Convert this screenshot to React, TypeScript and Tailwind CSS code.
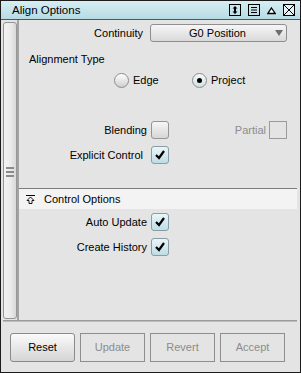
import React from "react";

const CheckMark = () => (
  <svg width="18" height="18" viewBox="0 0 18 18" className="block">
    <path d="M5 9 L8 12 L13 5" fill="none" stroke="#000" strokeWidth="2.2" />
  </svg>
);

const CheckBox: React.FC<{ checked?: boolean; disabled?: boolean }> = ({ checked, disabled }) => {
  if (disabled) {
    return <div className="w-[18px] h-[18px] border border-[#9a9a9a]" />;
  }
  if (checked) {
    return (
      <div className="w-[18px] h-[18px] rounded-[3px] border border-[#8a9ca4] bg-gradient-to-b from-[#eaf6f9] to-[#bddde7] flex items-center justify-center">
        <div className="-m-px">
          <CheckMark />
        </div>
      </div>
    );
  }
  return (
    <div className="w-[18px] h-[18px] rounded-[3px] border border-[#959595] bg-gradient-to-b from-[#f7f7f7] to-[#d6d6d6]" />
  );
};

const Radio: React.FC<{ checked?: boolean }> = ({ checked }) => (
  <div
    className={
      "w-[15px] h-[15px] rounded-full border border-[#8c8c8c] flex items-center justify-center " +
      (checked
        ? "bg-gradient-to-b from-[#f6fafa] to-[#cfe0e3]"
        : "bg-gradient-to-b from-[#ffffff] to-[#cfcfcf]")
    }
  >
    {checked && <div className="w-[5px] h-[5px] rounded-full bg-black" />}
  </div>
);

// label right edge sits at x=147, box starts at x=151
const CheckRow: React.FC<{ label: string; checked?: boolean; extra?: string }> = ({ label, checked, extra }) => (
  <div className="flex items-center h-[18px]">
    <div className={"w-[128px] text-right " + (extra ?? "")}>{label}</div>
    <div className="ml-[4px]">
      <CheckBox checked={checked} />
    </div>
  </div>
);

const TitleIcons = () => (
  <div className="flex items-center gap-[7px] pr-[5px]">
    <svg width="12" height="12" viewBox="0 0 12 12">
      <rect x="0.5" y="0.5" width="11" height="11" fill="none" stroke="#000" />
      <path d="M6 2 L8.5 4.5 H3.5 Z M6 10 L8.5 7.5 H3.5 Z" fill="#000" />
      <rect x="5" y="4" width="2" height="4" fill="#000" />
    </svg>
    <svg width="12" height="12" viewBox="0 0 12 12">
      <rect x="0.5" y="0.5" width="11" height="11" fill="none" stroke="#000" />
      <path d="M3 3.5 H9 M3 6 H9 M3 8.5 H9" stroke="#000" />
    </svg>
    <svg width="9" height="12" viewBox="0 0 9 12">
      <path d="M4.5 4 L8.2 9.5 H0.8 Z" fill="#fff" stroke="#000" strokeWidth="1.3" />
    </svg>
    <svg width="12" height="12" viewBox="0 0 12 12">
      <rect x="0.5" y="0.5" width="11" height="11" fill="#e6f3f6" stroke="#000" />
      <path d="M1 1 L11 11 M11 1 L1 11" stroke="#000" />
    </svg>
  </div>
);

export default function App() {
  return (
    <div
      className="w-[301px] h-[373px] border border-[#1c1c1c] bg-[#e4e4e4] flex flex-col text-[11px] text-black leading-[13px]"
      style={{ fontFamily: '"Liberation Sans", Arial, sans-serif' }}
    >
      {/* title bar */}
      <div className="h-[19px] shrink-0 border-b border-[#4a5a5e] bg-gradient-to-b from-[#d6eef3] to-[#b7dbe3] flex items-center justify-between">
        <span className="pl-[11px] text-[11.5px]">Align Options</span>
        <TitleIcons />
      </div>

      {/* main area */}
      <div className="h-[300px] flex shrink-0">
        <div className="ml-[2px] mt-[2px] mb-[1px] w-[14px] rounded-[3px] border border-[#959595] bg-gradient-to-r from-[#f2f2f2] via-[#ececec] to-[#d8d8d8] flex items-center justify-center">
          <div className="flex flex-col gap-[2px] mt-[2px]">
            <div className="w-[8px] h-[2px] bg-[#8a8a8a]" />
            <div className="w-[8px] h-[2px] bg-[#8a8a8a]" />
            <div className="w-[8px] h-[2px] bg-[#8a8a8a]" />
          </div>
        </div>
        <div className="flex-1 mr-[3px] border-l-2 border-[#a3a3a3] flex flex-col">
          {/* Continuity */}
          <div className="mt-[4px] flex items-center h-[18px] pr-[10px]">
            <div className="w-[124px] text-right">Continuity</div>
            <div className="ml-[7px] flex-1 h-[18px] rounded-[3px] border border-[#8e8e8e] bg-gradient-to-b from-[#f6f6f6] to-[#d9d9d9] flex items-center relative">
              <span className="flex-1 text-center pr-[2px]">G0 Position</span>
              <svg width="8" height="6" viewBox="0 0 8 6" className="absolute right-[3px] top-[5px]">
                <path d="M0 0 H8 L4 6 Z" fill="#6e6e6e" />
              </svg>
            </div>
          </div>

          {/* Alignment type */}
          <div className="mt-[10px] pl-[10px] h-[14px] flex items-center">Alignment Type</div>
          <div className="mt-[7px] pl-[95px] flex items-center h-[15px]">
            <div className="w-[78px] flex items-center gap-[4px]">
              <Radio />
              <span>Edge</span>
            </div>
            <div className="flex items-center gap-[4px]">
              <Radio checked />
              <span>Project</span>
            </div>
          </div>

          {/* Blending / Partial */}
          <div className="mt-[33px] flex items-center pr-[10px]">
            <CheckRow label="Blending" />
            <div className="ml-auto flex items-center gap-[3px]">
              <span className="text-[#8c8c8c]">Partial</span>
              <CheckBox disabled />
            </div>
          </div>
          <div className="mt-[7px]">
            <CheckRow label="Explicit Control" checked extra="pr-[4px]" />
          </div>

          {/* Control options section */}
          <div className="mt-[24px] h-px bg-[#7c7c7c]" />
          <div className="h-[20px] bg-[#f3f3f3] flex items-center">
            <svg width="9" height="9" viewBox="0 0 9 9" className="ml-[7px]">
              <path d="M0 0.5 H9" stroke="#000" />
              <path d="M4.5 2 L8 5.5 H6 V8.5 H3 V5.5 H1 Z" fill="none" stroke="#000" strokeWidth="0.9" />
            </svg>
            <span className="ml-[9px]">Control Options</span>
          </div>
          <div className="mt-[4px]">
            <CheckRow label="Auto Update" checked />
          </div>
          <div className="mt-[7px]">
            <CheckRow label="Create History" checked />
          </div>
        </div>
      </div>

      {/* bottom separator */}
      <div className="ml-[2px] mr-[3px] h-[2px] bg-[#9a9a9a] border-b border-[#bdbdbd]" />

      {/* buttons */}
      <div className="pt-[11px] pl-[9px] flex gap-[5px]">
        <button className="w-[65px] h-[29px] rounded-[3px] border border-[#8a8a8a] bg-gradient-to-b from-[#fafafa] to-[#d5d5d5] text-black">
          Reset
        </button>
        <button className="w-[65px] h-[29px] border border-[#8e8e8e] text-[#8c8c8c]">Update</button>
        <button className="w-[65px] h-[29px] border border-[#8e8e8e] text-[#8c8c8c]">Revert</button>
        <button className="w-[65px] h-[29px] border border-[#8e8e8e] text-[#8c8c8c]">Accept</button>
      </div>
    </div>
  );
}
